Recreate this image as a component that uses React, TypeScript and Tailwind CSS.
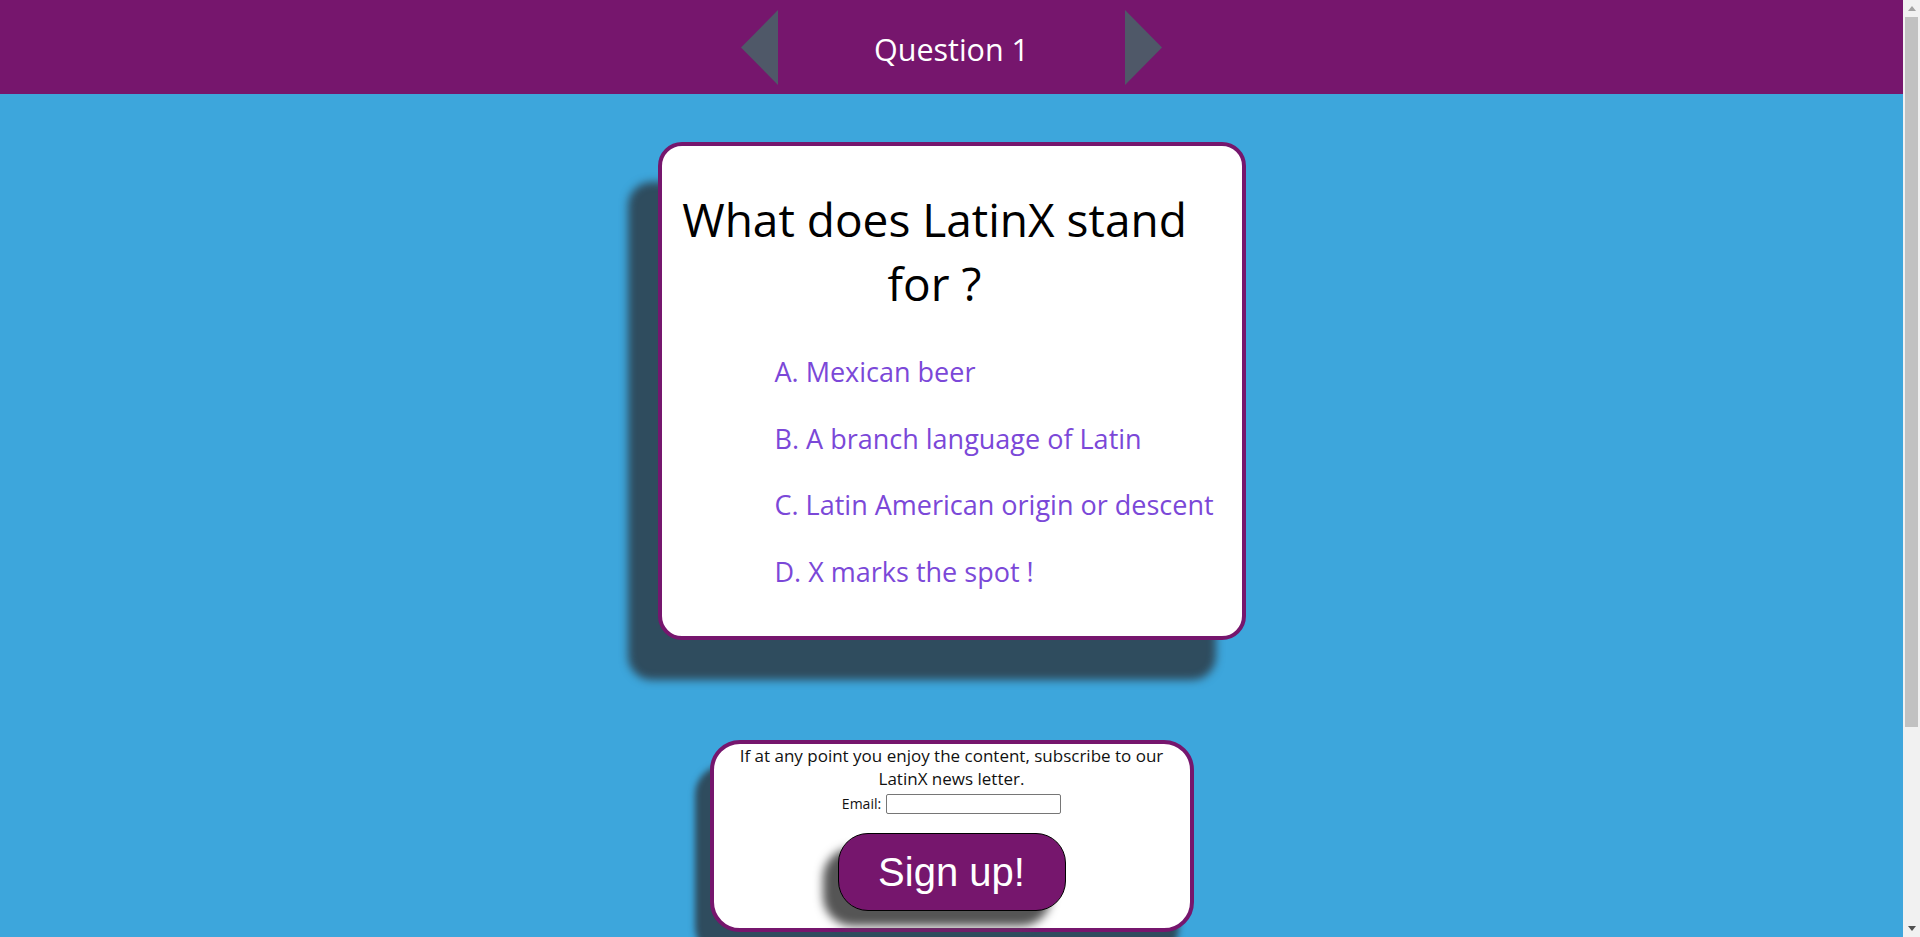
import { useState } from 'react'

const options = [
  'A. Mexican beer',
  'B. A branch language of Latin',
  'C. Latin American origin or descent',
  'D. X marks the spot !',
]

function Arrow({ dir }: { dir: 'left' | 'right' }) {
  return (
    <svg width="37" height="75" viewBox="0 0 37 75" className="shrink-0">
      {dir === 'left' ? (
        <polygon points="37,0 37,75 0,37.5" fill="#4f5868" />
      ) : (
        <polygon points="0,0 0,75 37,37.5" fill="#4f5868" />
      )}
    </svg>
  )
}

// fake window scrollbar, the page is taller than the viewport
function ScrollBar() {
  return (
    <div className="w-[17px] shrink-0 bg-[#f1f1f1] flex flex-col">
      <div className="h-[17px] flex items-center justify-center">
        <svg width="8" height="5" viewBox="0 0 8 5">
          <polygon points="4,0 8,5 0,5" fill="#a3a3a3" />
        </svg>
      </div>
      <div className="flex-1 px-[2px]">
        <div className="h-[710px] bg-[#c1c1c1]" />
      </div>
      <div className="h-[17px] flex items-center justify-center">
        <svg width="8" height="5" viewBox="0 0 8 5">
          <polygon points="0,0 8,0 4,5" fill="#505050" />
        </svg>
      </div>
    </div>
  )
}

export default function App() {
  const [email, setEmail] = useState('')

  return (
    <div className="h-screen flex font-['Open_Sans',sans-serif]">
      <div className="flex-1 overflow-y-auto bg-[#3da6dc] [scrollbar-width:none]">
        <div className="pb-[260px]">
          {/* header with question switcher */}
          <header className="h-[94px] bg-[#76166d] flex items-center justify-center">
            <Arrow dir="left" />
            <div className="w-[347px] text-center text-white text-[30.5px] pt-[6px]">Question 1</div>
            <Arrow dir="right" />
          </header>

          {/* question card */}
          <div className="w-[588px] mx-auto mt-[48px] bg-white border-4 border-[#76166d] rounded-[24px] shadow-[-30px_40px_8px_#2f4c5e]">
            <h1 className="mt-[41px] mr-[34px] text-center text-black text-[46px] leading-[64px] font-normal">
              What does LatinX stand for ?
            </h1>
            <ul className="mt-[24px] pl-[113px] pb-[30px]">
              {options.map((o) => (
                <li key={o} className="text-[27px] leading-[66.67px] text-[#7b48d8] cursor-pointer">
                  {o}
                </li>
              ))}
            </ul>
          </div>

          {/* newsletter */}
          <div className="w-[484px] mx-auto mt-[100px] bg-white border-4 border-[#76166d] rounded-[30px] shadow-[-15px_25px_6px_#2f4c5e] text-center pb-[17px]">
            <p className="text-[17px] leading-[23px] text-[#111]">
              If at any point you enjoy the content, subscribe to our LatinX news letter.
            </p>
            <div className="mt-[3px] h-[22px] flex items-center justify-center gap-[5px]">
              <label htmlFor="email" className="text-[14px] text-[#111]">
                Email:
              </label>
              <input
                id="email"
                type="email"
                value={email}
                onChange={(e) => setEmail(e.target.value)}
                className="w-[175px] h-[20px] border border-[#767676] rounded-[2px] bg-white text-[13px] px-1"
              />
            </div>
            <button className="mt-[18px] w-[228px] h-[78px] bg-[#76166d] border border-black rounded-[30px] text-white text-[40px] font-['Liberation_Sans',Arial,sans-serif] shadow-[-15px_15px_10px_#555]">
              Sign up!
            </button>
          </div>
        </div>
      </div>
      <ScrollBar />
    </div>
  )
}
